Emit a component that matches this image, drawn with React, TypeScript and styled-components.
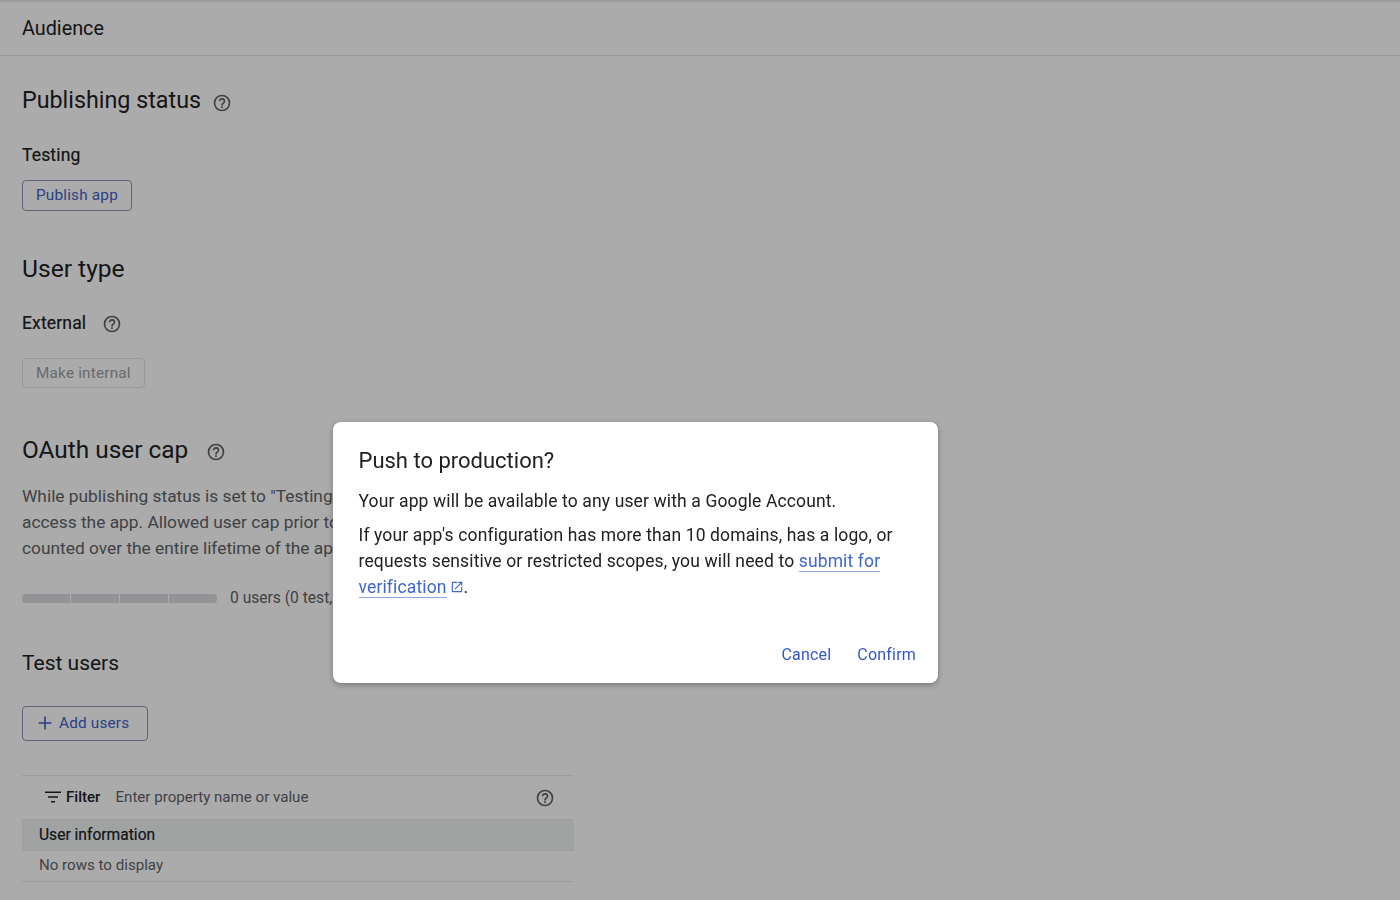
import styled, { createGlobalStyle } from "styled-components";
import { Plus } from "lucide-react";

const GlobalStyle = createGlobalStyle`
  html, body {
    margin: 0;
    height: 100%;
    overflow: hidden;
    background: #fff;
    font-family: Roboto, "Liberation Sans", sans-serif;
  }
`;

const Page = styled.div`
  height: 900px;
  overflow: hidden;
  color: #202124;
`;

const TopStrip = styled.div`
  height: 2px;
  background: #ebebf0;
`;

const Header = styled.div`
  height: 53px;
  display: flex;
  align-items: center;
  padding: 0 22px;
  font-size: 19.8px;
  border-bottom: 1px solid #e0e0e0;
  box-sizing: content-box;
`;

const Content = styled.div`
  padding: 0 22px;
  width: 552px;
`;

const SectionTitle = styled.h2<{ $top: number; $gap?: number; $size?: number }>`
  margin: ${({ $top }) => $top}px 0 0;
  height: 32px;
  display: flex;
  align-items: center;
  gap: ${({ $gap }) => $gap ?? 11}px;
  font-size: ${({ $size }) => $size ?? 24}px;
  font-weight: 400;
  letter-spacing: 0;
  white-space: nowrap;
`;

const HelpIcon = styled.svg<{ $drop?: number }>`
  width: 20px;
  height: 20px;
  flex: none;
  color: #5f6368;
  transform: translateY(${({ $drop }) => $drop ?? 3}px);
`;

const Label = styled.div<{ $top: number }>`
  margin-top: ${({ $top }) => $top}px;
  height: 24px;
  display: flex;
  align-items: center;
  gap: 16px;
  font-size: 17.5px;
  font-weight: 400;
  -webkit-text-stroke: 0.2px #202124;
  letter-spacing: 0.15px;
`;

const OutlineButton = styled.button<{ $top: number; $h: number; $disabled?: boolean; $right?: number }>`
  margin-top: ${({ $top }) => $top}px;
  height: ${({ $h }) => $h}px;
  display: inline-flex;
  align-items: center;
  gap: 4px;
  padding: 0 ${({ $right }) => $right ?? 13}px 1px 13px;
  border-radius: 4px;
  background: transparent;
  font-family: inherit;
  font-size: 15.3px;
  font-weight: 400;
  letter-spacing: 0.2px;
  color: ${({ $disabled }) => ($disabled ? "#9aa0a6" : "#4261c8")};
  border: 1px solid ${({ $disabled }) => ($disabled ? "#e3e3e3" : "#8a96b4")};

  svg {
    margin-left: -1px;
  }
`;

const Paragraph = styled.p`
  margin: 18px 0 0;
  width: 560px;
  font-size: 17.33px;
  line-height: 26px;
  color: #5f6368;
`;

const CapRow = styled.div`
  margin-top: 26px;
  display: flex;
  align-items: center;
  gap: 13px;
  height: 22px;
  font-size: 15.6px;
  color: #5f6368;
  white-space: nowrap;
`;

const CapBar = styled.div`
  display: grid;
  grid-template-columns: repeat(4, 1fr);
  gap: 1px;
  width: 195px;
`;

const CapSegment = styled.div`
  height: 9px;
  background: #dadce0;
  &:first-child {
    border-radius: 4px 0 0 4px;
  }
  &:last-child {
    border-radius: 0 4px 4px 0;
  }
`;

const TableBlock = styled.div`
  margin-top: 34px;
  border-top: 1px solid #e8eaed;
`;

const FilterRow = styled.div`
  height: 41px;
  padding: 0 19px 2px 22px;
  display: flex;
  align-items: center;
  font-size: 15.1px;
`;

const FilterLabel = styled.span`
  margin-left: 4px;
  font-weight: 500;
`;

const FilterPlaceholder = styled.span`
  margin-left: 15px;
  flex: 1;
  color: #5f6368;
`;

const TableHead = styled.div`
  height: 29px;
  padding: 0 17px 1px;
  display: flex;
  align-items: center;
  background: #f1f3f4;
  border-top: 1px solid #e8eaed;
  border-bottom: 1px solid #e8eaed;
  font-size: 15.6px;
  font-weight: 400;
  -webkit-text-stroke: 0.2px #202124;
`;

const EmptyRow = styled.div`
  height: 28px;
  padding: 0 17px 2px;
  display: flex;
  align-items: center;
  border-bottom: 1px solid #e8eaed;
  font-size: 15.1px;
  color: #5f6368;
`;

const Scrim = styled.div`
  position: fixed;
  inset: 0;
  background: rgba(0, 0, 0, 0.33);
`;

const Dialog = styled.div`
  position: fixed;
  left: 333px;
  top: 422px;
  width: 605px;
  height: 261px;
  box-sizing: border-box;
  padding: 25px 22px 0 25.5px;
  display: flex;
  flex-direction: column;
  background: #fff;
  border-radius: 8px;
  box-shadow: 0 2px 6px rgba(0, 0, 0, 0.3);
  color: #202124;
`;

const DialogTitle = styled.h3`
  margin: 0;
  height: 28px;
  line-height: 28px;
  font-size: 22px;
  font-weight: 400;
`;

const DialogText = styled.p<{ $top: number }>`
  margin: ${({ $top }) => $top}px 0 0;
  font-size: 17.5px;
  line-height: 26px;
  letter-spacing: 0.13px;
`;

const DialogLink = styled.a`
  color: #3f66cc;
  text-decoration: none;
  border-bottom: 1px solid #8ea4df;
`;

const LinkIcon = styled.svg`
  width: 14px;
  height: 14px;
  margin-left: 3px;
  vertical-align: -1px;
  color: #3f66cc;
`;

const DialogActions = styled.div`
  margin-top: auto;
  height: 44px;
  display: flex;
  justify-content: flex-end;
  gap: 26px;
`;

const TextButton = styled.button`
  padding: 0;
  height: 24px;
  margin-top: 3px;
  border: 0;
  background: none;
  font-family: inherit;
  font-size: 16px;
  font-weight: 400;
  letter-spacing: 0.2px;
  color: #3557c4;
`;

const FilterIcon = styled.svg`
  width: 18px;
  height: 18px;
  color: #202124;
`;

function Help({ drop }: { drop?: number }) {
  return (
    <HelpIcon $drop={drop} viewBox="0 0 24 24" fill="currentColor">
      <path d="M12 2a10 10 0 1 0 0 20 10 10 0 0 0 0-20Zm0 18a8 8 0 1 1 0-16 8 8 0 0 1 0 16Z" />
      <path d="M11 16h2v2h-2zM12.6 6.04A4 4 0 0 0 8 10h2a2 2 0 1 1 4 0c0 2-3 1.75-3 5h2c0-2.25 3-2.5 3-5a4 4 0 0 0-3.4-3.96Z" />
    </HelpIcon>
  );
}

export default function App() {
  return (
    <>
      <GlobalStyle />
      <Page>
        <TopStrip />
        <Header>Audience</Header>
        <Content>
          <SectionTitle $top={28} $size={23.3}>
            Publishing status <Help />
          </SectionTitle>
          <Label $top={27}>Testing</Label>
          <OutlineButton $top={13} $h={31}>Publish app</OutlineButton>
          <SectionTitle $top={41} $size={24.6}>User type</SectionTitle>
          <Label $top={27}>
            External <Help drop={1} />
          </Label>
          <OutlineButton $top={23} $h={30} $disabled>Make internal</OutlineButton>
          <SectionTitle $top={45} $gap={18} $size={24.4}>
            OAuth user cap <Help />
          </SectionTitle>
          <Paragraph>
            While publishing status is set to "Testing," only test users are able to
            access the app. Allowed user cap prior to app verification is 100, and is
            counted over the entire lifetime of the app.
          </Paragraph>
          <CapRow>
            <CapBar>
              <CapSegment />
              <CapSegment />
              <CapSegment />
              <CapSegment />
            </CapBar>
            0 users (0 test, 0 other) / 100 user cap
          </CapRow>
          <SectionTitle $top={38} $size={21}>Test users</SectionTitle>
          <OutlineButton $top={27} $h={35} $right={18}>
            <Plus size={20} strokeWidth={2} />
            Add users
          </OutlineButton>
          <TableBlock>
            <FilterRow>
              <FilterIcon viewBox="0 0 18 18" fill="currentColor">
                <path d="M1 3.5h16v1.6H1zM4 8.2h10v1.6H4zM7 12.9h4v1.6H7z" />
              </FilterIcon>
              <FilterLabel>Filter</FilterLabel>
              <FilterPlaceholder>Enter property name or value</FilterPlaceholder>
              <Help drop={1} />
            </FilterRow>
            <TableHead>User information</TableHead>
            <EmptyRow>No rows to display</EmptyRow>
          </TableBlock>
        </Content>
      </Page>
      <Scrim />
      <Dialog>
        <DialogTitle>Push to production?</DialogTitle>
        <DialogText $top={13}>Your app will be available to any user with a Google Account.</DialogText>
        <DialogText $top={8}>
          If your app's configuration has more than 10 domains, has a logo, or
          requests sensitive or restricted scopes, you will need to{" "}
          <DialogLink>submit for verification</DialogLink>
          <LinkIcon viewBox="0 0 24 24" fill="currentColor">
            <path d="M19 19H5V5h7V3H5a2 2 0 0 0-2 2v14c0 1.1.9 2 2 2h14a2 2 0 0 0 2-2v-7h-2v7ZM14 3v2h3.59l-9.83 9.83 1.41 1.41L19 6.41V10h2V3h-7Z" />
          </LinkIcon>
          .
        </DialogText>
        <DialogActions>
          <TextButton>Cancel</TextButton>
          <TextButton>Confirm</TextButton>
        </DialogActions>
      </Dialog>
    </>
  );
}
